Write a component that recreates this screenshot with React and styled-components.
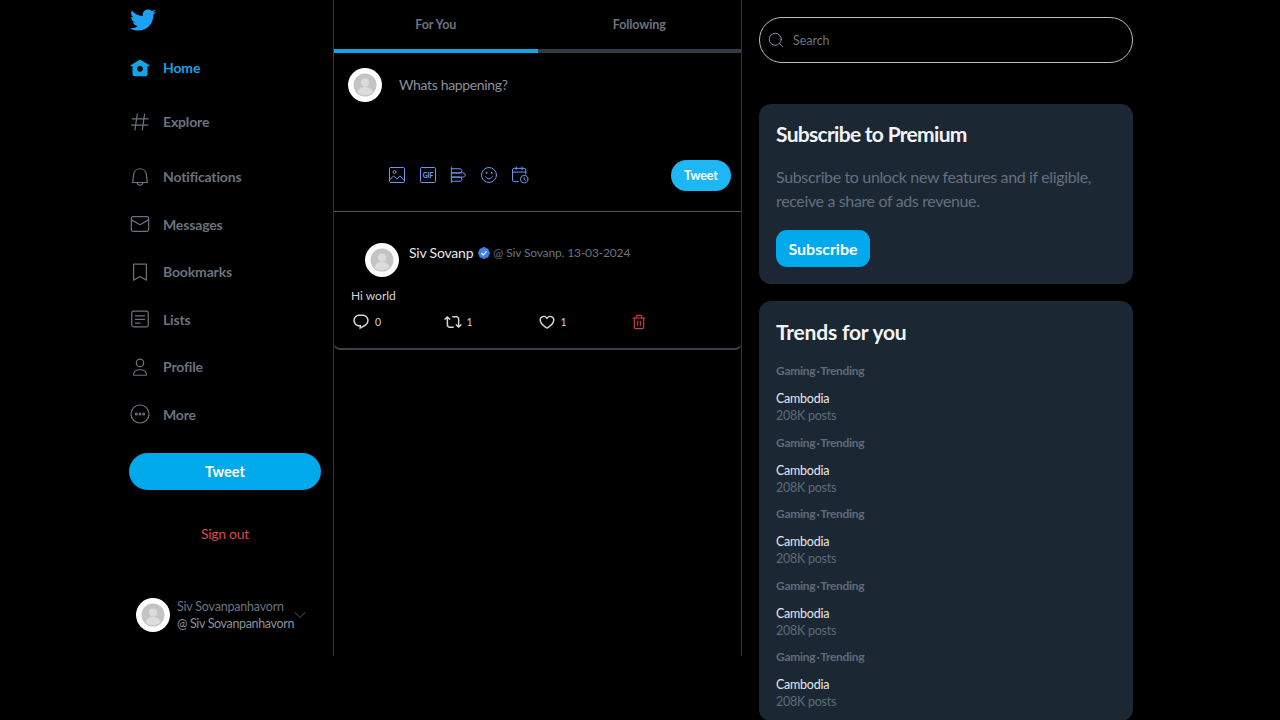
import React from 'react';
import styled, { createGlobalStyle } from 'styled-components';
import { FaTwitter } from 'react-icons/fa';
import { Search, ChevronDown, Trash2 } from 'lucide-react';

const GlobalStyle = createGlobalStyle`
	html, body {
		margin: 0;
		height: 720px;
		overflow: hidden;
		background: #000;
		font-family: 'Lato', 'Liberation Sans', sans-serif;
	}
`;

const Page = styled.div`
	display: flex;
	align-items: flex-start;
	padding-left: 129px;
	height: 720px;
	overflow: hidden;
`;

const Sidebar = styled.aside`
	width: 204px;
	height: 656px;
	box-sizing: content-box;
	border-right: 1px solid #33363d;
	display: flex;
	flex-direction: column;
`;

const Logo = styled.div`
	height: 24px;
	margin-top: 7px;
	padding-left: 1px;
	color: #1da1f2;
	font-size: 26px;
	line-height: 24px;
	svg {
		display: block;
	}
`;

const Nav = styled.nav`
	display: flex;
	flex-direction: column;
	margin-top: 24.5px;
`;

const NavItem = styled.a`
	display: flex;
	align-items: center;
	height: 24px;
	margin-bottom: ${(p) => p.$gap}px;
	color: ${(p) => (p.$active ? '#0ea5e9' : '#6b7280')};
	font-size: 14px;
	letter-spacing: -0.15px;
	font-weight: 700;
	&:last-child {
		margin-bottom: 0;
	}
`;

const NavIcon = styled.span`
	display: flex;
	align-items: center;
	justify-content: center;
	width: 22px;
	margin-right: 12px;
	svg {
		display: block;
	}
`;

const TweetButton = styled.button`
	width: 192px;
	height: 37px;
	margin-top: 26.5px;
	border: none;
	border-radius: 19px;
	background: #00a8ec;
	color: #fff;
	font: 700 14.5px 'Lato', sans-serif;
`;

const SignOut = styled.div`
	width: 192px;
	margin-top: 35px;
	color: #d9484b;
	font-size: 14px;
	letter-spacing: -0.3px;
	line-height: 18px;
	text-align: center;
`;

const UserRow = styled.div`
	display: flex;
	align-items: center;
	margin-top: 55px;
	padding-left: 7px;
`;

const UserText = styled.div`
	margin-left: 7px;
	color: #6b7280;
	font-size: 12.5px;
	letter-spacing: -0.2px;
	line-height: 17px;
	white-space: nowrap;
`;

const Handle = styled.div`
	color: #8b9099;
	letter-spacing: -0.35px;
`;

const Chevron = styled.span`
	display: flex;
	margin-left: -4px;
	color: #5b6472;
`;

const Center = styled.main`
	width: 407px;
	height: 656px;
	border-right: 1px solid #33363d;
	flex-shrink: 0;
`;

const Tabs = styled.div`
	display: flex;
	height: 53px;
`;

const Tab = styled.div`
	flex: 1;
	box-sizing: border-box;
	padding-top: 17px;
	border-bottom: 4px solid ${(p) => (p.$active ? '#0ea5e9' : '#333b47')};
	color: #6b7280;
	font-size: 12.5px;
	letter-spacing: -0.1px;
	line-height: 16px;
	font-weight: 700;
	text-align: center;
`;

const Composer = styled.section`
	box-sizing: border-box;
	height: 159px;
	padding: 15px 10px 0 14px;
	border-bottom: 1px solid #55575c;
`;

const ComposerTop = styled.div`
	display: flex;
	align-items: center;
	gap: 17px;
`;

const Prompt = styled.span`
	padding-bottom: 2px;
	color: #8b9099;
	font-size: 14px;
	letter-spacing: -0.35px;
`;

const ComposerBottom = styled.div`
	display: flex;
	align-items: center;
	justify-content: space-between;
	margin-top: 58px;
	padding-left: 39px;
`;

const Tools = styled.div`
	display: flex;
	align-items: center;
	gap: 10.7px;
	margin-top: -1px;
	color: #6d97ee;
	svg {
		display: block;
	}
`;

const SmallTweet = styled.button`
	width: 60px;
	height: 31px;
	border: none;
	border-radius: 16px;
	background: #1cb7f5;
	color: #fff;
	font: 700 12.5px 'Lato', sans-serif;
	letter-spacing: -0.1px;
`;

const TweetCard = styled.article`
	box-sizing: border-box;
	height: 138px;
	padding: 31px 0 0 17px;
	border-bottom: 2px solid #3d4048;
	border-left: 1px solid #2a2c31;
	border-right: 1px solid #2a2c31;
	border-radius: 0 0 7px 7px;
	margin-left: -1px;
	margin-right: -1px;
`;

const TweetHead = styled.div`
	display: flex;
	align-items: flex-start;
	padding-left: 14px;
`;

const TweetMeta = styled.div`
	display: flex;
	align-items: center;
	margin-left: 10px;
	height: 19px;
`;

const TweetName = styled.span`
	color: #e5e7eb;
	font-size: 14px;
	letter-spacing: -0.2px;
`;

const TweetDate = styled.span`
	margin-left: 2px;
	color: #6b7280;
	font-size: 12px;
	letter-spacing: -0.15px;
`;

const TweetText = styled.p`
	margin: 9.5px 0 0;
	color: #d1d5db;
	font-size: 12px;
	line-height: 18px;
`;

const Actions = styled.div`
	display: flex;
	align-items: center;
	margin-top: 8.5px;
	padding-left: 1px;
`;

const Action = styled.div`
	display: flex;
	align-items: center;
	gap: 5px;
	width: ${(p) => p.$width}px;
	color: ${(p) => p.$color || '#d1d5db'};
	font-size: 10.5px;
	svg {
		display: block;
	}
`;

const Right = styled.aside`
	width: 374px;
	margin-left: 17px;
	flex-shrink: 0;
	padding-top: 17px;
`;

const SearchBox = styled.div`
	display: flex;
	align-items: center;
	box-sizing: border-box;
	height: 46px;
	padding-left: 7px;
	border: 1px solid #bdbec0;
	border-radius: 23px;
	color: #6b7280;
	font-size: 12.5px;
	letter-spacing: -0.05px;
	gap: 8px;
`;

const Card = styled.section`
	margin-top: ${(p) => p.$gap}px;
	padding: 0 17px;
	border-radius: 12px;
	background: #1b2733;
	overflow: hidden;
`;

const CardTitle = styled.h2`
	margin: ${(p) => p.$top}px 0 0;
	color: #f3f4f6;
	font-size: 21px;
	letter-spacing: ${(p) => p.$spacing}px;
	line-height: 26px;
	font-weight: 700;
`;

const CardText = styled.p`
	margin: 18px 0 0;
	color: #64707f;
	font-size: 16px;
	letter-spacing: -0.36px;
	line-height: 24px;
`;

const SubscribeButton = styled.button`
	display: block;
	width: 94px;
	height: 37px;
	margin: 17px 0 17px;
	padding: 0 0 1px;
	border: none;
	border-radius: 11px;
	background: #00a8ec;
	color: #fff;
	font: 700 16px 'Lato', sans-serif;
`;

const TrendList = styled.div`
	margin-top: 18px;
	display: flex;
	flex-direction: column;
`;

const TrendItem = styled.div`
	height: 71.5px;
`;

const TrendTopic = styled.div`
	color: #5f6b7a;
	font-size: 12px;
	letter-spacing: -0.3px;
	word-spacing: -1.4px;
	line-height: 16px;
	font-weight: 700;
	margin-bottom: 11px;
`;

const TrendName = styled.div`
	color: #e5e7eb;
	font-size: 12.5px;
	letter-spacing: -0.25px;
	line-height: 17px;
`;

const TrendPosts = styled.div`
	color: #5f6b7a;
	font-size: 12.5px;
	letter-spacing: -0.25px;
	line-height: 17px;
`;

const Avatar = () => (
	<svg width="34" height="34" viewBox="0 0 34 34" style={{ flexShrink: 0 }}>
		<circle cx="17" cy="17" r="17" fill="#fff" />
		<circle cx="17" cy="17" r="11.5" fill="#c4c4c4" />
		<circle cx="17" cy="14.5" r="4" fill="#dcdcdc" />
		<path d="M9.5 24.5c1-4 4-5.5 7.5-5.5s6.5 1.500 7.500 5.500a11.500 11.500 0 0 1-15 0z" fill="#dcdcdc" />
	</svg>
);

const Line = ({ children, size = 20, width = 1.3, view = 24 }) => (
	<svg width={size} height={size} viewBox={`0 0 ${view} ${view}`} fill="none" stroke="currentColor" strokeWidth={width} strokeLinecap="round" strokeLinejoin="round">
		{children}
	</svg>
);

const Fill = ({ d, size = 18 }) => (
	<svg width={size} height={size} viewBox="0 0 24 24" fill="currentColor">
		<path d={d} />
	</svg>
);

const HOME = 'M12 1.696L.622 8.807l1.06 1.696L3 9.679V19.5C3 20.881 4.119 22 5.5 22h13c1.381 0 2.5-1.119 2.5-2.5V9.679l1.318.824 1.06-1.696L12 1.696zM12 16.5c-1.933 0-3.5-1.567-3.5-3.5s1.567-3.5 3.5-3.5 3.5 1.567 3.500 3.500-1.567 3.500-3.500 3.500z';
const REPLY = 'M1.751 10c0-4.42 3.584-8 8.005-8h4.366c4.49 0 8.129 3.64 8.129 8.13 0 2.96-1.607 5.68-4.196 7.11l-8.054 4.46v-3.69h-.067c-4.49.1-8.183-3.51-8.183-8.01zm8.005-6c-3.317 0-6.005 2.69-6.005 6 0 3.37 2.77 6.08 6.138 6.01l.351-.01h1.761v2.3l5.087-2.81c1.951-1.08 3.163-3.13 3.163-5.36 0-3.39-2.744-6.13-6.129-6.13H9.756z';
const RETWEET = 'M4.5 3.88l4.432 4.14-1.364 1.46L5.5 7.55V16c0 1.1.896 2 2 2H13v2H7.5c-2.209 0-4-1.79-4-4V7.55L1.432 9.48.068 8.02 4.5 3.88zM16.5 6H11V4h5.5c2.209 0 4 1.79 4 4v8.45l2.068-1.93 1.364 1.46-4.432 4.14-4.432-4.14 1.364-1.46 2.068 1.93V8c0-1.1-.896-2-2-2z';
const HEART = 'M16.697 5.5c-1.222-.06-2.679.51-3.89 2.16l-.805 1.09-.806-1.09C9.984 6.01 8.526 5.44 7.304 5.5c-1.243.07-2.349.78-2.91 1.91-.552 1.12-.633 2.78.479 4.82 1.074 1.97 3.257 4.27 7.129 6.61 3.87-2.34 6.052-4.64 7.126-6.61 1.111-2.04 1.03-3.7.477-4.82-.561-1.13-1.666-1.84-2.908-1.91zm4.187 7.69c-1.351 2.48-4.001 5.12-8.379 7.67l-.503.3-.504-.3c-4.379-2.55-7.029-5.19-8.382-7.67-1.36-2.5-1.41-4.86-.514-6.67.887-1.79 2.647-2.91 4.601-3.01 1.651-.09 3.368.56 4.798 2.01 1.429-1.45 3.146-2.1 4.796-2.01 1.954.1 3.714 1.22 4.601 3.01.896 1.81.846 4.17-.514 6.67z';

const navItems = [
	{ label: 'Home', active: true, gap: 30, icon: <Fill d={HOME} size={20} /> },
	{ label: 'Explore', gap: 31, icon: <Line size={22}><path d="M9 3.500 6.500 20.500M17 3.500 14.500 20.500M3.500 8.500h17.500M3 15.500h17.500" /></Line> },
	{ label: 'Notifications', gap: 23.6, icon: <Line size={22}><path d="M12 3c-3.600 0-6.500 2.700-6.900 6.200L4 18h16l-1.100-8.800C18.500 5.700 15.600 3 12 3z" /><path d="M8.800 18.200c.4 1.800 1.600 2.800 3.200 2.800s2.800-1 3.200-2.800" /></Line> },
	{ label: 'Messages', gap: 23.6, icon: <Line size={22}><rect x="2.500" y="4" width="19" height="16" rx="2" /><path d="M2.800 7.500 12 12.800l9.200-5.300" /></Line> },
	{ label: 'Bookmarks', gap: 23.6, icon: <Line size={22}><path d="M5 3.500h14v17.500L12 16.800 5 21z" /></Line> },
	{ label: 'Lists', gap: 23.6, icon: <Line size={22}><rect x="3" y="3.500" width="18" height="17" rx="2" /><path d="M7 8.500h10M7 12.500h10M7 16.500h5" /></Line> },
	{ label: 'Profile', gap: 23.6, icon: <Line size={22}><circle cx="12" cy="7.500" r="4" /><path d="M5 20.500c0-3.500 2.500-5.500 7-5.500s7 2 7 5.500c0 .4-.3.5-.6.5H5.600c-.3 0-.6-.1-.6-.5z" /></Line> },
	{ label: 'More', gap: 0, icon: <Line size={22}><circle cx="12" cy="12" r="9.800" /><circle cx="8" cy="12" r="1" /><circle cx="12" cy="12" r="1" /><circle cx="16" cy="12" r="1" /></Line> },
];

const trends = [1, 2, 3, 4, 5];

const App = () => (
	<Page>
		<GlobalStyle />
		<Sidebar>
			<Logo>
				<FaTwitter />
			</Logo>
			<Nav>
				{navItems.map((item) => (
					<NavItem key={item.label} $active={item.active} $gap={item.gap}>
						<NavIcon>{item.icon}</NavIcon>
						{item.label}
					</NavItem>
				))}
			</Nav>
			<TweetButton>Tweet</TweetButton>
			<SignOut>Sign out</SignOut>
			<UserRow>
				<Avatar />
				<UserText>
					Siv Sovanpanhavorn
					<Handle>@ Siv Sovanpanhavorn</Handle>
				</UserText>
				<Chevron>
					<ChevronDown size={20} strokeWidth={1.1} />
				</Chevron>
			</UserRow>
		</Sidebar>
		<Center>
			<Tabs>
				<Tab $active>For You</Tab>
				<Tab>Following</Tab>
			</Tabs>
			<Composer>
				<ComposerTop>
					<Avatar />
					<Prompt>Whats happening?</Prompt>
				</ComposerTop>
				<ComposerBottom>
					<Tools>
						<Line size={20} width={1.2}>
							<rect x="3" y="3" width="18" height="18" rx="1.500" />
							<circle cx="9" cy="8.500" r="1.800" />
							<path d="M3 18l5-5 4 4 3.500-4 5.500 6" />
						</Line>
						<Line size={20} width={1.2}>
							<rect x="3" y="3" width="18" height="18" rx="1.500" />
							<text x="12" y="15" textAnchor="middle" fontFamily="Lato, sans-serif" fontSize="8" fontWeight="900" fill="currentColor" stroke="none">GIF</text>
						</Line>
						<Line size={20} width={1.2}>
							<path d="M4 3v18M4 4.500h11l2 2.500-2 2.500H4M4 9.500h15l2 2.500-2 2.500H4M4 14.500h11l2 2.500-2 2.500H4" />
						</Line>
						<Line size={20} width={1.2}>
							<circle cx="12" cy="12" r="9" />
							<path d="M8 14c1 1.600 2.400 2.500 4 2.500s3-.9 4-2.500" />
							<circle cx="9" cy="9.500" r=".6" />
							<circle cx="15" cy="9.500" r=".6" />
						</Line>
						<Line size={20} width={1.2}>
							<path d="M10 20H5a2 2 0 0 1-2-2V6a2 2 0 0 1 2-2h12a2 2 0 0 1 2 2v5M3 8.500h16M7.500 2.500v3M14.500 2.500v3" />
							<circle cx="17" cy="17" r="4.500" />
							<path d="M17 15v2.200l1.600 1" />
						</Line>
					</Tools>
					<SmallTweet>Tweet</SmallTweet>
				</ComposerBottom>
			</Composer>
			<TweetCard>
				<TweetHead>
					<Avatar />
					<TweetMeta>
						<TweetName>Siv Sovanp</TweetName>
						<svg width="14" height="14" viewBox="0 0 24 24" style={{ marginLeft: 4 }}>
							<path fill="#3f7fe8" d="M22.250 12c0-1.430-.88-2.670-2.190-3.340.46-1.390.2-2.900-.81-3.910s-2.520-1.270-3.910-.81c-.66-1.310-1.910-2.190-3.340-2.190s-2.670.88-3.330 2.190c-1.400-.46-2.910-.2-3.920.81s-1.260 2.520-.8 3.910c-1.310.67-2.200 1.910-2.200 3.340s.89 2.670 2.200 3.340c-.46 1.390-.21 2.900.8 3.910s2.520 1.260 3.910.81c.67 1.310 1.910 2.190 3.340 2.190s2.680-.88 3.340-2.190c1.390.45 2.900.2 3.910-.81s1.270-2.520.81-3.910c1.310-.67 2.190-1.910 2.190-3.340z" />
							<path d="M7.500 12.200l3 3 6-6" fill="none" stroke="#fff" strokeWidth="2" />
						</svg>
						<TweetDate>@ Siv Sovanp. 13-03-2024</TweetDate>
					</TweetMeta>
				</TweetHead>
				<TweetText>Hi world</TweetText>
				<Actions>
					<Action $width={91.5}>
						<Fill d={REPLY} />
						0
					</Action>
					<Action $width={94}>
						<Fill d={RETWEET} />
						1
					</Action>
					<Action $width={93}>
						<Fill d={HEART} />
						1
					</Action>
					<Action $width={20} $color="#d43c3c">
						<Trash2 size={16} strokeWidth={1.7} />
					</Action>
				</Actions>
			</TweetCard>
		</Center>
		<Right>
			<SearchBox>
				<Search size={18} strokeWidth={1.3} color="#8b9099" />
				Search
			</SearchBox>
			<Card $gap={41}>
				<CardTitle $top={17} $spacing={-0.7}>Subscribe to Premium</CardTitle>
				<CardText>Subscribe to unlock new features and if eligible, receive a share of ads revenue.</CardText>
				<SubscribeButton>Subscribe</SubscribeButton>
			</Card>
			<Card $gap={17}>
				<CardTitle $top={18} $spacing={-0.2}>Trends for you</CardTitle>
				<TrendList>
					{trends.map((n) => (
						<TrendItem key={n}>
							<TrendTopic>Gaming · Trending</TrendTopic>
							<TrendName>Cambodia</TrendName>
							<TrendPosts>208K posts</TrendPosts>
						</TrendItem>
					))}
				</TrendList>
			</Card>
		</Right>
	</Page>
);

export default App;
